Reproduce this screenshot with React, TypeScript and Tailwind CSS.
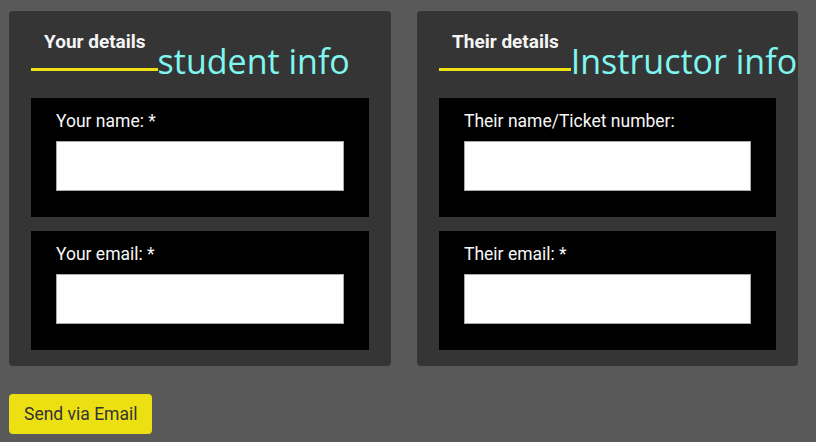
import React from "react";

const roboto = { fontFamily: "Roboto, 'Liberation Sans', sans-serif" };

function Field({ label }: { label: string }) {
  return (
    <div className="bg-black pt-[11px] pb-[26px] px-[25px]">
      <label className="block text-[17.5px] leading-[24px] text-[#f7f7f7]">{label}</label>
      <input
        type="text"
        className="mt-[8px] block w-full h-[50px] bg-white border border-[#a9a9a9] outline-none"
      />
    </div>
  );
}

function Panel({ title, note, fields, w }: { title: string; note: string; fields: string[]; w: string }) {
  return (
    <div className={`${w} bg-[#353535] rounded-[4px] pt-[19px] px-[22px] pb-[16px]`}>
      <div className="flex items-end whitespace-nowrap">
        <div className="pl-[13px] pr-[12px] pb-[14px] border-b-[3px] border-[#ece013] text-[19px] leading-[24px] font-bold text-[#f5f5f5]">
          {title}
        </div>
        <span
          className="text-[34px] leading-none text-[#80f6f0] -mb-[7px]"
          style={{ fontFamily: "'Open Sans', 'Noto Sans', sans-serif" }}
        >
          {note}
        </span>
      </div>
      <div className="mt-[27px] flex flex-col gap-[14px]">
        {fields.map((f) => (
          <Field key={f} label={f} />
        ))}
      </div>
    </div>
  );
}

export default function App() {
  return (
    <div className="min-h-screen w-[816px] bg-[#595959] pt-[11px] pl-[9px]" style={roboto}>
      <div className="flex gap-[26px]">
        <Panel w="w-[382px]" title="Your details" note="student info" fields={["Your name: *", "Your email: *"]} />
        <Panel
          w="w-[381px]"
          title="Their details"
          note="Instructor info"
          fields={["Their name/Ticket number:", "Their email: *"]}
        />
      </div>
      <button className="mt-[28px] h-[40px] px-[15px] bg-[#ece013] rounded-[4px] text-[17.5px] text-[#333333]">
        Send via Email
      </button>
    </div>
  );
}
